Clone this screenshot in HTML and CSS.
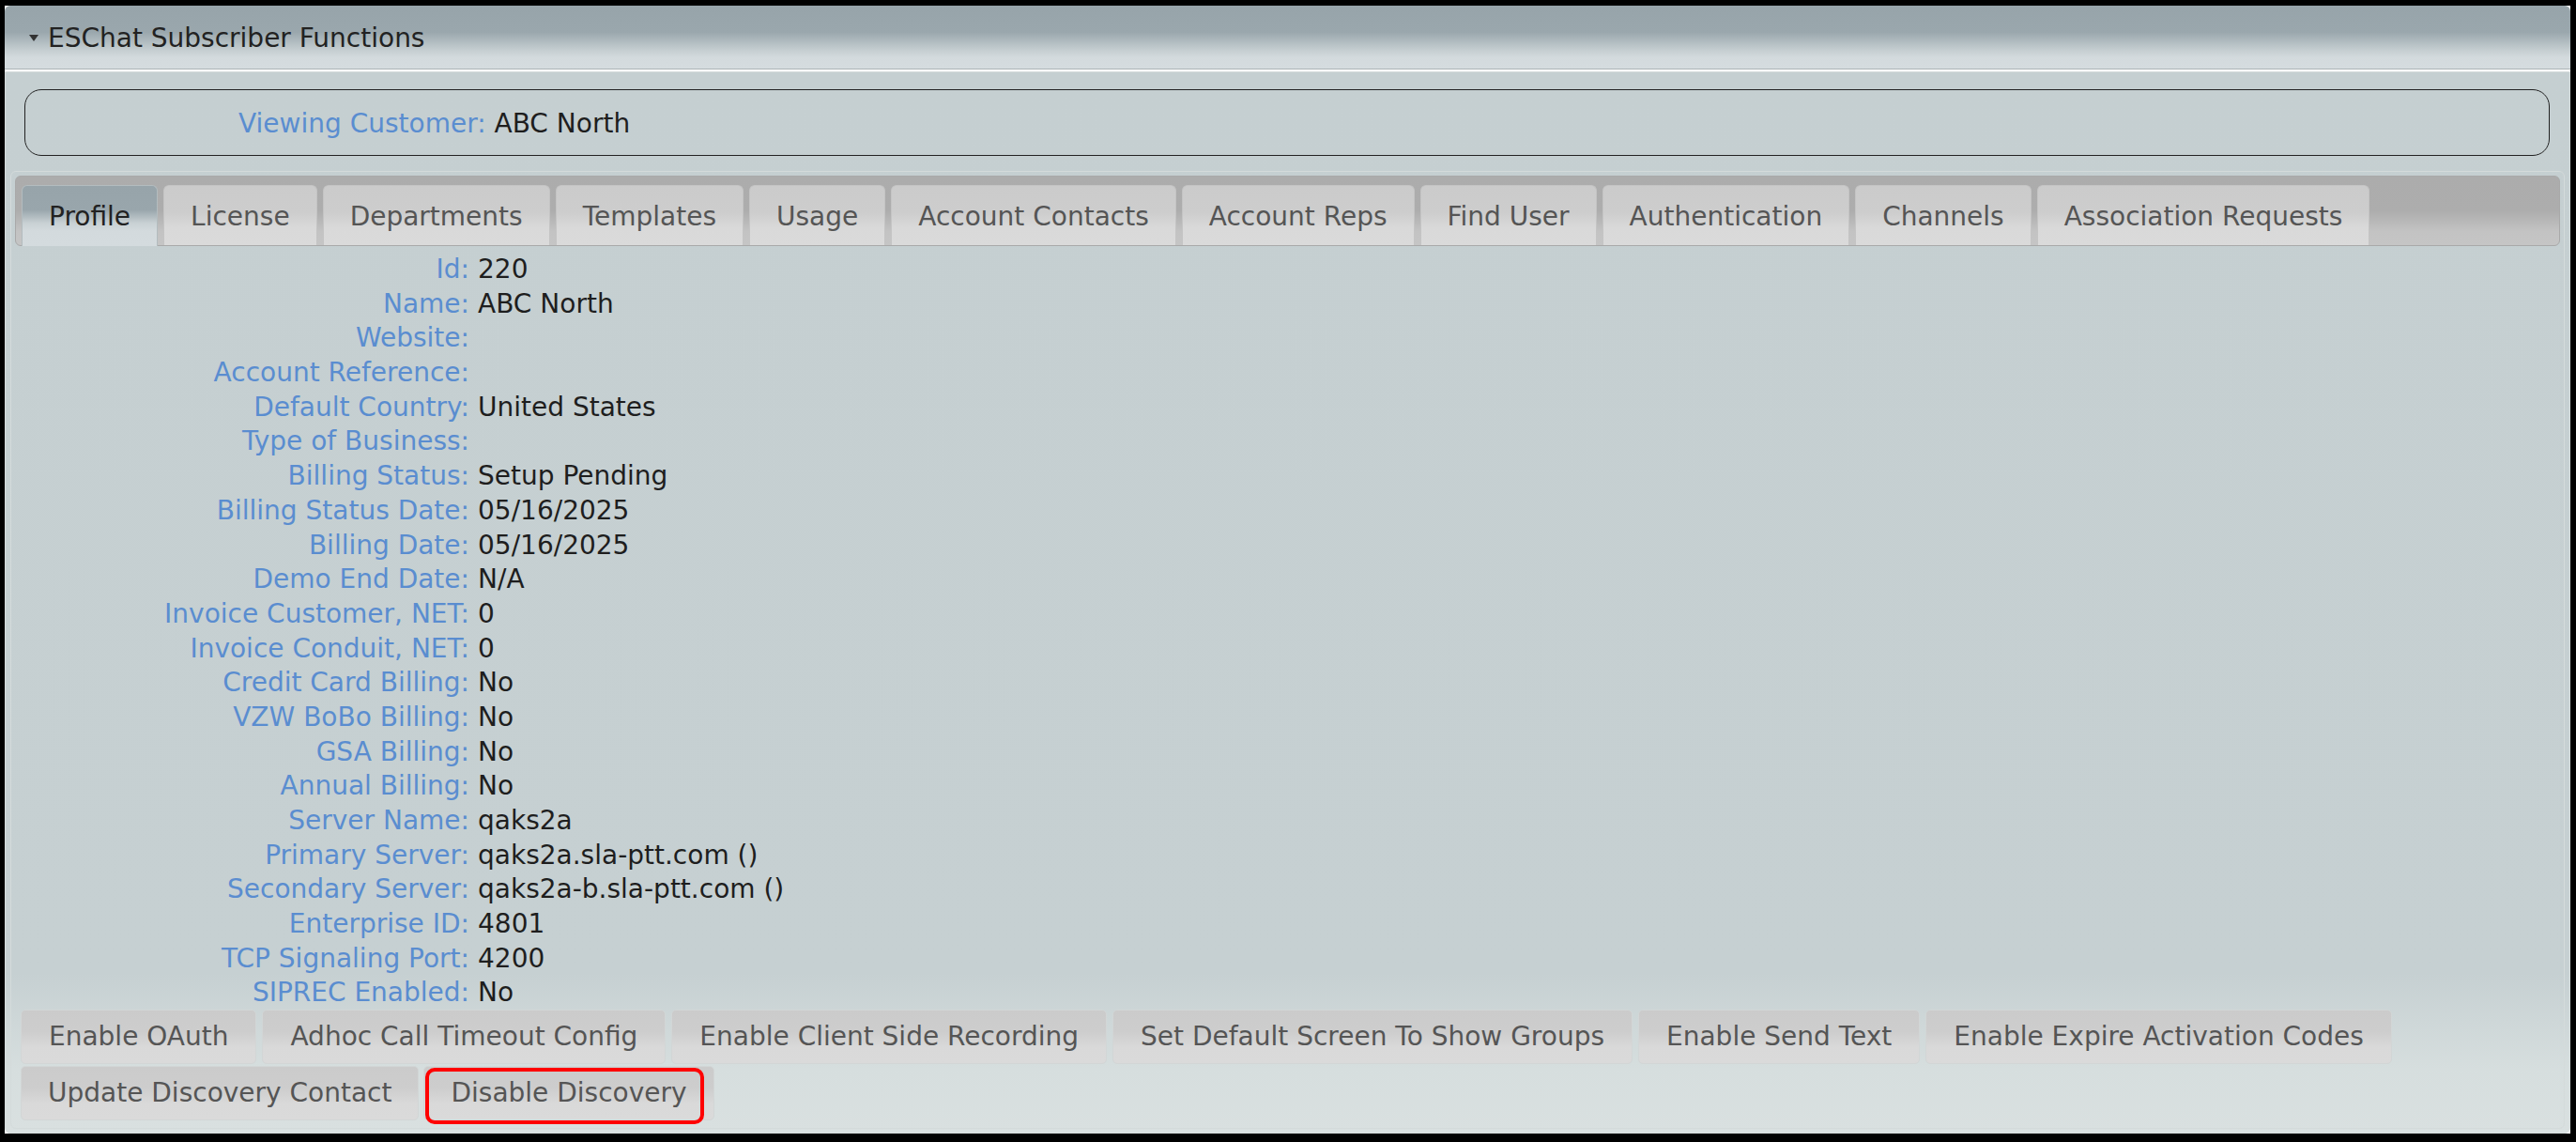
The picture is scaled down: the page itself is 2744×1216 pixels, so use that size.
FILE: index.html
```html
<!DOCTYPE html>
<html>
<head>
<meta charset="utf-8">
<title>ESChat Subscriber Functions</title>
<link rel="stylesheet" href="styles.css">
</head>
<body>
<div class="frame">
  <div class="acc-header"><span class="caret"></span>ESChat Subscriber Functions</div>
  <div class="acc-content">
    <div class="customer-box"><span class="lbl">Viewing Customer:</span>&nbsp;<span class="val">ABC North</span></div>
    <div class="tabs">
      <ul class="tab-nav">
        <li class="tab active">Profile</li>
        <li class="tab">License</li>
        <li class="tab">Departments</li>
        <li class="tab">Templates</li>
        <li class="tab">Usage</li>
        <li class="tab">Account Contacts</li>
        <li class="tab">Account Reps</li>
        <li class="tab">Find User</li>
        <li class="tab">Authentication</li>
        <li class="tab">Channels</li>
        <li class="tab">Association Requests</li>
      </ul>
      <div class="tab-panel">
        <div class="fields">
          <div class="lbl">Id:</div><div class="val">220</div>
          <div class="lbl">Name:</div><div class="val">ABC North</div>
          <div class="lbl">Website:</div><div class="val"></div>
          <div class="lbl">Account Reference:</div><div class="val"></div>
          <div class="lbl">Default Country:</div><div class="val">United States</div>
          <div class="lbl">Type of Business:</div><div class="val"></div>
          <div class="lbl">Billing Status:</div><div class="val">Setup Pending</div>
          <div class="lbl">Billing Status Date:</div><div class="val">05/16/2025</div>
          <div class="lbl">Billing Date:</div><div class="val">05/16/2025</div>
          <div class="lbl">Demo End Date:</div><div class="val">N/A</div>
          <div class="lbl">Invoice Customer, NET:</div><div class="val">0</div>
          <div class="lbl">Invoice Conduit, NET:</div><div class="val">0</div>
          <div class="lbl">Credit Card Billing:</div><div class="val">No</div>
          <div class="lbl">VZW BoBo Billing:</div><div class="val">No</div>
          <div class="lbl">GSA Billing:</div><div class="val">No</div>
          <div class="lbl">Annual Billing:</div><div class="val">No</div>
          <div class="lbl">Server Name:</div><div class="val">qaks2a</div>
          <div class="lbl">Primary Server:</div><div class="val">qaks2a.sla-ptt.com ()</div>
          <div class="lbl">Secondary Server:</div><div class="val">qaks2a-b.sla-ptt.com ()</div>
          <div class="lbl">Enterprise ID:</div><div class="val">4801</div>
          <div class="lbl">TCP Signaling Port:</div><div class="val">4200</div>
          <div class="lbl">SIPREC Enabled:</div><div class="val">No</div>
        </div>
        <div class="actions">
          <div class="btn-row wide">
            <button class="btn">Enable OAuth</button>
            <button class="btn">Adhoc Call Timeout Config</button>
            <button class="btn">Enable Client Side Recording</button>
            <button class="btn">Set Default Screen To Show Groups</button>
            <button class="btn">Enable Send Text</button>
            <button class="btn">Enable Expire Activation Codes</button>
          </div>
          <div class="btn-row">
            <button class="btn">Update Discovery Contact</button>
            <button class="btn highlighted">Disable Discovery<span class="annotation"></span></button>
          </div>
        </div>
      </div>
    </div>
  </div>
</div>
</body>
</html>
```
FILE: styles.css
```css
html, body {
  margin: 0;
  padding: 0;
  background: #000;
}

body {
  width: 2744px;
  height: 1216px;
  overflow: hidden;
  font-family: "DejaVu Sans", Verdana, sans-serif;
  font-size: 28px;
}

.frame {
  margin: 6px 6px 0 5px;
  height: 1201px;
  background: #fff;
  display: flex;
  flex-direction: column;
}

.acc-header {
  box-sizing: border-box;
  height: 68px;
  margin-bottom: 2px;
  border-bottom: 1px solid #abb3b6;
  border-radius: 6px 6px 0 0;
  background: linear-gradient(to bottom, #97a4aa 0%, #9aa7ad 42%, #c4cdd0 70%, #d3dadd 82%, #d5dcdf 100%);
  color: #222;
  display: flex;
  align-items: center;
  padding: 3px 0 0 26px;
  line-height: 32px;
}

.caret {
  width: 0;
  height: 0;
  border-left: 5px solid transparent;
  border-right: 5px solid transparent;
  border-top: 7px solid #333;
  margin-right: 10px;
  margin-top: -2px;
}

.acc-content {
  flex: 1;
  box-sizing: border-box;
  border: 1px solid #d5dcdc;
  border-radius: 0 0 6px 6px;
  background: linear-gradient(to bottom, #c5cfd1 0%, #c6d0d2 85%, #d6dede 94%, #d9e0e0 100%);
  padding: 18px 0 4px 0;
  display: flex;
  flex-direction: column;
}

.customer-box {
  box-sizing: border-box;
  height: 71px;
  margin: 0 21px 0 20px;
  border: 1px solid #222;
  border-radius: 18px;
  padding: 3px 0 0 227px;
  display: flex;
  align-items: center;
  line-height: 32px;
}

.lbl {
  color: #5a8dd0;
}

.val {
  color: #1e1e1e;
}

.tabs {
  flex: 1;
  margin: 16px 5px 0 5px;
  border: 1px solid #d4dbdb;
  border-radius: 6px;
  padding: 4px 4px 0 4px;
  display: flex;
  flex-direction: column;
}

.tab-nav {
  list-style: none;
  margin: 0;
  box-sizing: border-box;
  height: 75px;
  padding: 9px 6px 0 6px;
  border: 1px solid #a9a9a9;
  border-radius: 6px;
  background: linear-gradient(to bottom, #acacac 0%, #adadad 50%, #c3c3c3 80%, #c5c5c5 100%);
  display: flex;
  align-items: flex-start;
}

.tab {
  box-sizing: border-box;
  height: 64px;
  margin-right: 6px;
  padding: 17px 28px 0 28px;
  line-height: 32px;
  border: 1px solid #c4c4c4;
  border-bottom: none;
  border-radius: 6px 6px 0 0;
  background: linear-gradient(to bottom, #cbcbcb 0%, #cdcdcd 45%, #d9d9d9 70%, #dadada 100%);
  color: #555;
  white-space: nowrap;
}

.tab.active {
  height: 65px;
  margin-bottom: -1px;
  border-color: #b3bcbf;
  background: linear-gradient(to bottom, #97a4aa 0%, #99a6ac 40%, #c9d1d4 62%, #d3dadd 75%, #d4dbde 100%);
  color: #222;
}

.tab-panel {
  flex: 1;
  display: flex;
  flex-direction: column;
}

.fields {
  margin-top: 7px;
  display: grid;
  grid-template-columns: 484px 1fr;
  column-gap: 9px;
  line-height: 36.68px;
}

.fields .lbl {
  text-align: right;
}

.fields .val {
  min-height: 36.68px;
}

.actions {
  margin-top: -1px;
  padding-left: 6px;
  display: flex;
  flex-direction: column;
  gap: 2px;
}

.btn-row {
  display: flex;
  gap: 5px;
}

.btn-row.wide {
  gap: 6px;
}

.btn-row.wide .btn {
  padding: 0 29px;
}

.btn {
  box-sizing: border-box;
  height: 58px;
  margin: 0;
  padding: 0 28px;
  font-family: "DejaVu Sans", Verdana, sans-serif;
  font-size: 28px;
  line-height: 32px;
  color: #555;
  border: 1px solid #d2d6d6;
  border-radius: 5px;
  background: linear-gradient(to bottom, #cbcbcb 0%, #cdcdcd 40%, #d9d9d9 70%, #dadada 100%);
  white-space: nowrap;
}

.highlighted {
  position: relative;
}

.annotation {
  position: absolute;
  left: 1px;
  top: 1px;
  width: 297px;
  height: 60px;
  box-sizing: border-box;
  border: 4px solid #ff0000;
  border-radius: 10px;
}
```
